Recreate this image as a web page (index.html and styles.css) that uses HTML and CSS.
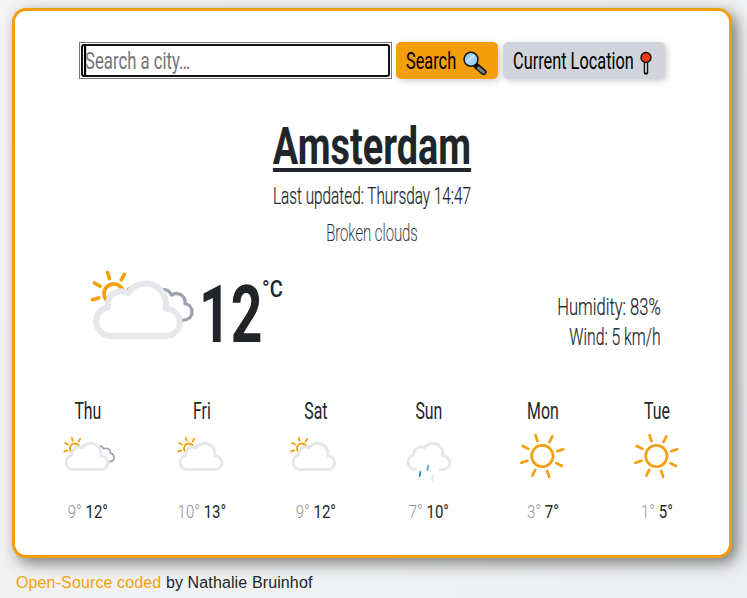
FILE: index.html
```html
<!DOCTYPE html>
<html lang="en">
<head>
<meta charset="utf-8">
<title>Weather</title>
<link rel="stylesheet" href="styles.css">
</head>
<body>
<svg class="defs" aria-hidden="true">
  <defs>
    <g id="rays" stroke-linecap="round">
      <path id="ray" d="M0-47V-66"/>
      <use href="#ray" transform="rotate(45)"/><use href="#ray" transform="rotate(90)"/>
      <use href="#ray" transform="rotate(135)"/><use href="#ray" transform="rotate(180)"/>
      <use href="#ray" transform="rotate(225)"/><use href="#ray" transform="rotate(270)"/>
      <use href="#ray" transform="rotate(315)"/>
    </g>
    <symbol id="clear" viewBox="-90 -90 180 180">
      <g fill="none" stroke="#f59e0b" stroke-width="8" transform="translate(-2 0) rotate(-18)"><circle r="32"/><use href="#rays"/></g>
    </symbol>
    <symbol id="partly" viewBox="0 -33 360 360">
      <g fill="none" stroke="#f59e0b" stroke-width="11" transform="translate(101 101) rotate(-16)"><circle r="29"/><use href="#rays"/></g>
      <path transform="translate(-13.3 -37.7) scale(5.84)" fill="#fff" stroke="#e5e7eb" stroke-width="3" stroke-linejoin="round" d="M46.5 31.5h-.32a10.49 10.49 0 0 0-19.11-8 7 7 0 0 0-10.57 6 7.21 7.21 0 0 0 .1 1.14A7.5 7.5 0 0 0 18 45.5h28.500a7 7 0 0 0 0-14z"/>
    </symbol>
    <symbol id="broken" viewBox="0 -33 360 360">
      <path fill="none" stroke="#9ca3af" stroke-width="10" stroke-linejoin="round" d="M248 88C262 88 270 94 275 105C293 93 318 108 315 131C328 133 336 143 336 156C336 171 324 181 306 181"/>
      <use href="#partly" x="0" y="-33" width="360" height="360"/>
    </symbol>
    <symbol id="rain" viewBox="-6 -33 360 360">
      <path transform="translate(-13.3 -37.7) scale(5.84)" fill="none" stroke="#e5e7eb" stroke-width="3" stroke-linecap="round" stroke-linejoin="round" d="M43.67 45.5h2.83a7 7 0 0 0 0-14h-.32a10.49 10.49 0 0 0-19.11-8 7 7 0 0 0-10.57 6 7.21 7.21 0 0 0 .1 1.14A7.5 7.5 0 0 0 18 45.5"/>
      <g stroke-width="11" stroke-linecap="round"><path stroke="#2885c7" d="M122 243L118 267"/><path stroke="#5ba6d8" d="M169 205L165 231"/><path stroke="#d3e7f8" d="M197 267L193 293"/></g>
    </symbol>
  </defs>
</svg>
<main class="card">
  <form class="search">
    <div class="field"><div class="focus"><input type="text" placeholder="Search a city…" aria-label="City"></div></div>
    <button type="button" class="btn btn-search"><span>Search</span>
      <svg width="25" height="25" viewBox="0 0 25 25"><path d="M13.500 15L20.500 21" stroke="#111" stroke-width="6" stroke-linecap="round"/><path d="M15.500 17L20.500 21.200" stroke="#757d82" stroke-width="3" stroke-linecap="round"/><circle cx="8" cy="8.300" r="7" fill="#9fd0f7" stroke="#111" stroke-width="1.500"/><path d="M4 11L11 4" stroke="#c5e4fb" stroke-width="2.500"/></svg>
    </button>
    <button type="button" class="btn btn-location"><span>Current Location</span>
      <svg width="12" height="25" viewBox="0 0 12 25"><path d="M6 9V21.500" stroke="#111" stroke-width="4.500" stroke-linecap="round"/><path d="M6 10V21.500" stroke="#d5d5d5" stroke-width="1.800"/><circle cx="6" cy="6.500" r="5" fill="#f03a17" stroke="#111" stroke-width="1.400"/></svg>
    </button>
  </form>
  <h1>Amsterdam</h1>
  <p class="updated">Last updated: Thursday 14:47</p>
  <p class="description">Broken clouds</p>
  <section class="current">
    <svg width="120" height="120"><use href="#broken"/></svg>
    <strong class="temp">12</strong><span class="unit">°C</span>
    <div class="details"><p class="humidity">Humidity: 83%</p><p class="wind">Wind: 5 km/h</p></div>
  </section>
  <section class="forecast">
    <div class="day"><h2>Thu</h2><svg><use href="#broken"/></svg><p><span>9°</span> 12°</p></div>
    <div class="day"><h2>Fri</h2><svg><use href="#partly"/></svg><p><span>10°</span> 13°</p></div>
    <div class="day"><h2>Sat</h2><svg><use href="#partly"/></svg><p><span>9°</span> 12°</p></div>
    <div class="day"><h2>Sun</h2><svg><use href="#rain"/></svg><p><span>7°</span> 10°</p></div>
    <div class="day"><h2>Mon</h2><svg><use href="#clear"/></svg><p><span>3°</span> 7°</p></div>
    <div class="day"><h2>Tue</h2><svg><use href="#clear"/></svg><p><span>1°</span> 5°</p></div>
  </section>
</main>
<footer><a>Open-Source coded</a> by Nathalie Bruinhof</footer>
</body>
</html>
```
FILE: styles.css
```css
* { box-sizing: border-box; }
body {
  margin: 0;
  padding: 8px 12px 0;
  height: 598px;
  overflow: hidden;
  background: linear-gradient(135deg, #f5f5f5, #eceef0);
  color: #212529;
  font: 400 23px/30px Roboto, sans-serif;
}
.defs { position: absolute; width: 0; height: 0; }
h1, h2, p { margin: 0; font-weight: 400; white-space: nowrap; }
svg { display: block; overflow: visible; }

.card {
  width: 720px;
  height: 550px;
  padding-top: 31px;
  border: 3px solid #f59e0b;
  border-radius: 14px;
  background: #fff;
  box-shadow: 5px 5px 15px rgba(0, 0, 0, .5);
}

.search { display: flex; margin-left: 64px; height: 37px; }
.field { width: 313px; padding: 1px; border: 1px solid #767676; }
.focus { height: 33px; padding: 0 1px; border: 2px solid #101010; border-radius: 3px; overflow: hidden; }
.focus input {
  display: block;
  width: 418px;
  height: 29px;
  padding: 2px 0 0;
  border: 0;
  border-left: 3px solid #000;
  outline: 0;
  background: none;
  font: inherit;
  text-indent: -2px;
  transform: scaleX(.727);
  transform-origin: left;
}
.focus input::placeholder { color: #757575; }
.btn {
  display: flex;
  align-items: center;
  justify-content: space-between;
  height: 37px;
  border: 0;
  border-radius: 5px;
  box-shadow: 2px 2px 6px rgba(0, 0, 0, .2);
  color: #000;
  font: inherit;
}
.btn span { padding-top: 2px; white-space: nowrap; transform: scaleX(.71); transform-origin: left; }
.btn svg { flex: none; margin-top: 5px; }
.btn-search { width: 102px; margin-left: 4px; padding: 0 10px; background: #f59e0b; }
.btn-search span { width: 50px; }
.btn-location { width: 162px; margin-left: 5px; padding: 0 13px 0 10px; background: #d1d5db; }
.btn-location span { width: 121px; }

h1 {
  margin-top: 37px;
  font-size: 51px;
  line-height: 61px;
  font-weight: 700;
  text-align: center;
  text-decoration: underline 4px;
  text-underline-offset: 4px;
  text-decoration-skip-ink: none;
  transform: scaleX(.7425);
}
.updated { margin-top: 1px; line-height: 37px; font-weight: 300; text-align: center; transform: scaleX(.666); -webkit-text-stroke: .2px; }
.description { padding-top: 2px; line-height: 34px; font-weight: 200; text-align: center; transform: scaleX(.65); -webkit-text-stroke: .2px; }

.current { display: flex; height: 120px; margin-top: -2px; padding-left: 65px; }
.temp { width: 63px; margin-left: -1px; padding-top: 2px; font-size: 80px; line-height: 129px; font-weight: 700; transform: scaleX(.69); transform-origin: left; }
.unit { width: 22px; padding-top: 1px; line-height: 80px; font-weight: 500; transform: scaleX(.87); transform-origin: left; }
.details { margin: 44px 68px 0 auto; text-align: right; }
.details p { font-weight: 300; transform: scaleX(.72); transform-origin: right; -webkit-text-stroke: .2px; }
.details .wind { transform: scaleX(.685); }

.forecast { display: grid; grid-template-columns: repeat(6, 113.75px); margin: 26px 0 0 16px; text-align: center; }
.day h2 { height: 31px; padding-top: 1px; font-size: 23px; line-height: 31px; transform: scaleX(.69); }
.day svg { width: 60px; height: 60px; margin: 0 auto; }
.day p { margin-top: 11px; font-size: 19px; line-height: 30px; transform: scaleX(.79); }
.day span { color: #909090; font-weight: 300; }

footer { margin: 13px 0 0 4px; font: 16px/24px "Liberation Sans", Arial, sans-serif; letter-spacing: .125px; }
footer a { color: #f59e0b; }
```
